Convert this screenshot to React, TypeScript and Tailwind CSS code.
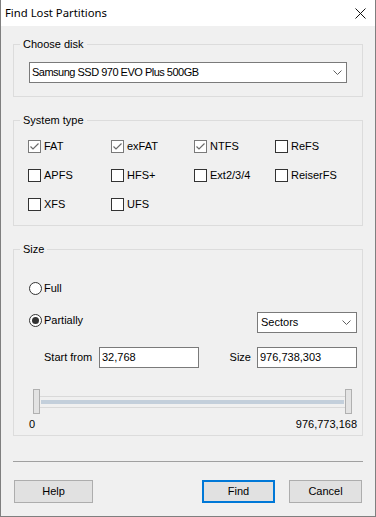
import type { ReactNode } from "react";

const ROWS: { label: string; checked: boolean }[][] = [
  [
    { label: "FAT", checked: true },
    { label: "exFAT", checked: true },
    { label: "NTFS", checked: true },
    { label: "ReFS", checked: false },
  ],
  [
    { label: "APFS", checked: false },
    { label: "HFS+", checked: false },
    { label: "Ext2/3/4", checked: false },
    { label: "ReiserFS", checked: false },
  ],
  [
    { label: "XFS", checked: false },
    { label: "UFS", checked: false },
  ],
];

function Chevron() {
  return (
    <svg width="9" height="5" viewBox="0 0 9 5" fill="none">
      <path d="M0.5 0.5L4.5 4.5L8.5 0.5" stroke="#606060" strokeWidth="1" />
    </svg>
  );
}

function Group({ title, children, className = "" }: { title: string; children: ReactNode; className?: string }) {
  return (
    <fieldset className={`mx-[12px] border border-[#dcdcdc] ${className}`}>
      <legend className="ml-[6px] px-[3px] leading-[13px]">{title}</legend>
      {children}
    </fieldset>
  );
}

function Checkbox({ label, checked }: { label: string; checked: boolean }) {
  return (
    <div className="flex items-center h-[13px] gap-[3px]">
      <span
        className={`w-[13px] h-[13px] bg-white border flex items-center justify-center ${
          checked ? "border-[#7a7a7a]" : "border-[#333333]"
        }`}
      >
        {checked && (
          <svg width="11" height="11" viewBox="0 0 11 11" fill="none">
            <path d="M1.5 5.5L4 8L9.5 2.5" stroke="#6a6a6a" strokeWidth="1.2" />
          </svg>
        )}
      </span>
      <span className="leading-[13px]">{label}</span>
    </div>
  );
}

function Radio({ label, checked }: { label: string; checked: boolean }) {
  return (
    <div className="flex items-center h-[13px] gap-[2px]">
      <span className="w-[13px] h-[13px] rounded-full bg-white border border-[#333333] flex items-center justify-center">
        {checked && <span className="w-[7px] h-[7px] rounded-full bg-[#333333]" />}
      </span>
      <span className="leading-[13px]">{label}</span>
    </div>
  );
}

function Thumb() {
  return <div className="w-[7px] h-[25px] bg-[#e3e3e3] border border-[#b0b0b0]" />;
}

function Button({ label, primary = false, className = "" }: { label: string; primary?: boolean; className?: string }) {
  return (
    <button
      className={`h-[23px] bg-[#e1e1e1] flex items-center justify-center ${
        primary ? "border-2 border-[#0078d7]" : "border border-[#adadad]"
      } ${className}`}
    >
      {label}
    </button>
  );
}

export default function App() {
  return (
    <div className="w-[376px] h-[517px] border-x border-b border-[#7f7f7f] bg-[#f0f0f0] text-[11px] text-black font-['Liberation_Sans',Arial,sans-serif] flex flex-col">
      <div className="h-[26px] bg-white flex items-center justify-between pl-[4px] pr-[9px] shrink-0">
        <span className="text-[11.3px] font-['Noto_Sans',sans-serif]">Find Lost Partitions</span>
        <svg width="11" height="11" viewBox="0 0 11 11" fill="none">
          <path d="M0.5 0.5L10.5 10.5M10.5 0.5L0.5 10.5" stroke="#111" strokeWidth="1" />
        </svg>
      </div>

      <Group title="Choose disk" className="mt-[12px] pb-[13px]">
        <div className="mt-[11px] mx-[15px] h-[21px] bg-white border border-[#7a7a7a] flex items-center justify-between pl-[2px] pr-[4px]">
          <span className="tracking-[-0.5px]">Samsung SSD 970 EVO Plus 500GB</span>
          <Chevron />
        </div>
      </Group>

      <Group title="System type" className="mt-[17px] pb-[14px]">
        <div className="pt-[13px] pl-[14px] flex flex-col gap-y-[16px]">
          {ROWS.map((row, i) => (
            <div key={i} className="grid grid-cols-[83px_83px_81px_auto]">
              {row.map((c) => (
                <Checkbox key={c.label} label={c.label} checked={c.checked} />
              ))}
            </div>
          ))}
        </div>
      </Group>

      <Group title="Size" className="mt-[17px] pb-[4px]">
        <div className="mt-[26px] pl-[15px]">
          <Radio label="Full" checked={false} />
        </div>
        <div className="mt-[17px] pl-[15px] pr-[5px] flex items-start justify-between h-[21px]">
          <div className="mt-[2px]">
            <Radio label="Partially" checked />
          </div>
          <div className="w-[100px] h-[21px] bg-white border border-[#7a7a7a] flex items-center justify-between pl-[3px] pr-[5px]">
            <span>Sectors</span>
            <Chevron />
          </div>
        </div>
        <div className="mt-[14px] pl-[30px] pr-[5px] flex items-center justify-between h-[21px]">
          <div className="flex items-center">
            <span className="w-[55px]">Start from</span>
            <div className="w-[100px] h-[21px] bg-white border border-[#7a7a7a] flex items-center pl-[2px]">32,768</div>
          </div>
          <div className="flex items-center gap-[6px]">
            <span>Size</span>
            <div className="w-[100px] h-[21px] bg-white border border-[#7a7a7a] flex items-center pl-[2px]">976,738,303</div>
          </div>
        </div>
        <div className="mt-[21px] pl-[19px] pr-[10px] flex items-center">
          <Thumb />
          <div className="flex-1 h-[12px] border-y border-[#d9d9d9] flex items-center px-px">
            <div className="w-full h-[4px] bg-[#c3cfdb]" />
          </div>
          <Thumb />
        </div>
        <div className="mt-[4px] pl-[15px] pr-[5px] flex justify-between leading-[13px]">
          <span>0</span>
          <span>976,773,168</span>
        </div>
      </Group>

      <div className="mt-[25px] mx-[12px] h-px bg-[#a0a0a0]" />

      <div className="mt-[18px] mx-[13px] flex items-center">
        <Button label="Help" className="w-[79px]" />
        <div className="flex-1" />
        <Button label="Find" primary className="w-[73px]" />
        <Button label="Cancel" className="w-[73px] ml-[14px]" />
      </div>
    </div>
  );
}
